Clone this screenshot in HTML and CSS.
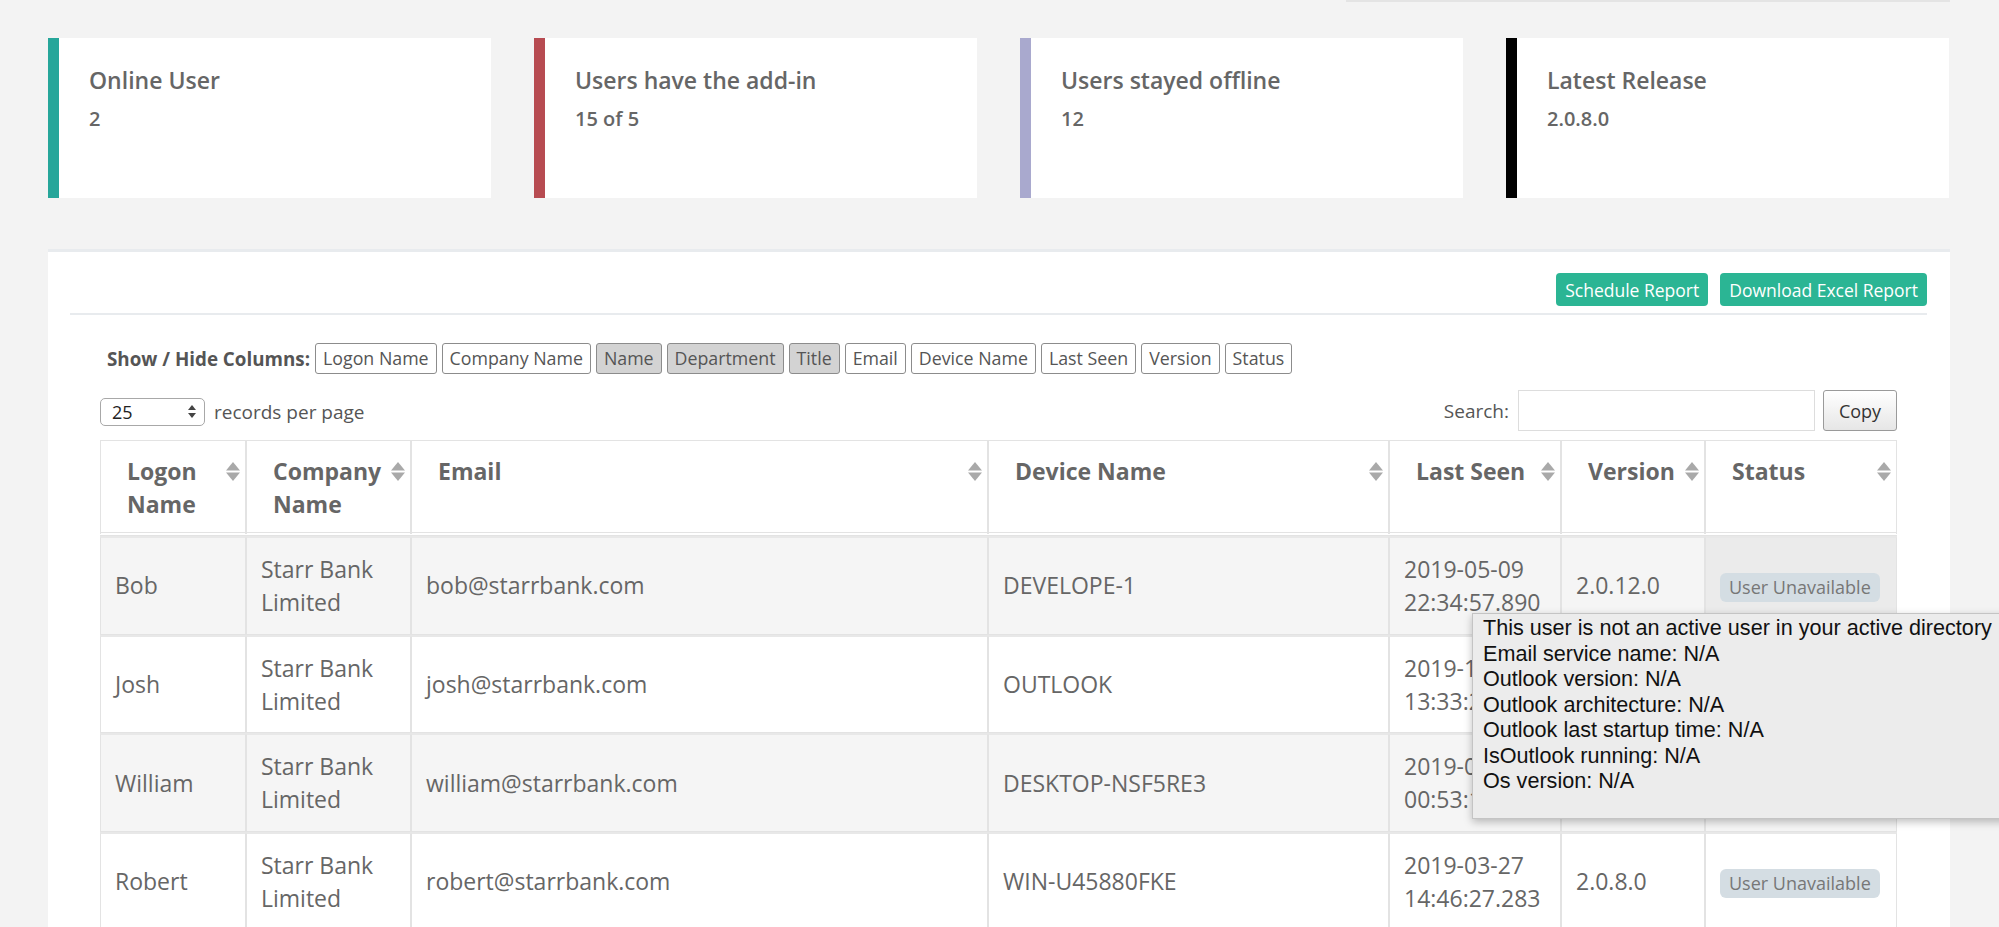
FILE: index.html
```html
<!DOCTYPE html>
<html>
<head>
<meta charset="utf-8">
<link rel="stylesheet" href="styles.css">
</head>
<body>
<div class="topbar"></div>

<div class="tiles">
  <div class="tile tile-teal"><div class="tile-title">Online User</div><div class="tile-value">2</div></div>
  <div class="tile tile-red"><div class="tile-title">Users have the add-in</div><div class="tile-value">15 of 5</div></div>
  <div class="tile tile-lav"><div class="tile-title">Users stayed offline</div><div class="tile-value">12</div></div>
  <div class="tile tile-black"><div class="tile-title">Latest Release</div><div class="tile-value">2.0.8.0</div></div>
</div>

<div class="panel">
  <div class="panel-toolbar">
    <button class="btn-success">Schedule Report</button>
    <button class="btn-success">Download Excel Report</button>
  </div>
  <div class="panel-rule"></div>
  <div class="panel-body">
    <div class="colvis">
      <span class="colvis-label">Show / Hide Columns:</span>
      <span class="colvis-btn">Logon Name</span>
      <span class="colvis-btn">Company Name</span>
      <span class="colvis-btn off">Name</span>
      <span class="colvis-btn off">Department</span>
      <span class="colvis-btn off">Title</span>
      <span class="colvis-btn">Email</span>
      <span class="colvis-btn">Device Name</span>
      <span class="colvis-btn">Last Seen</span>
      <span class="colvis-btn">Version</span>
      <span class="colvis-btn">Status</span>
    </div>
    <div class="controls">
      <div class="length">
        <span class="select"><span class="select-val">25</span>
          <svg class="select-arrows" width="8" height="13" viewBox="0 0 8 13"><path d="M4 0L8 5H0z" fill="#444"/><path d="M0 8H8L4 13z" fill="#444"/></svg>
        </span>
        <span class="length-text">records per page</span>
      </div>
      <div class="search">
        <span class="search-label">Search:</span>
        <span class="search-input"></span>
        <button class="btn-copy">Copy</button>
      </div>
    </div>

    <table class="grid">
      <colgroup>
        <col class="c1"><col class="c2"><col class="c3"><col class="c4"><col class="c5"><col class="c6"><col class="c7">
      </colgroup>
      <thead>
        <tr>
          <th>Logon Name<svg class="sort" viewBox="0 0 14 19"><path d="M0 8.5L7 0L14 8.5z"/><path d="M0 10.5H14L7 19z"/></svg></th>
          <th>Company Name<svg class="sort" viewBox="0 0 14 19"><path d="M0 8.5L7 0L14 8.5z"/><path d="M0 10.5H14L7 19z"/></svg></th>
          <th>Email<svg class="sort" viewBox="0 0 14 19"><path d="M0 8.5L7 0L14 8.5z"/><path d="M0 10.5H14L7 19z"/></svg></th>
          <th>Device Name<svg class="sort" viewBox="0 0 14 19"><path d="M0 8.5L7 0L14 8.5z"/><path d="M0 10.5H14L7 19z"/></svg></th>
          <th>Last Seen<svg class="sort" viewBox="0 0 14 19"><path d="M0 8.5L7 0L14 8.5z"/><path d="M0 10.5H14L7 19z"/></svg></th>
          <th>Version<svg class="sort" viewBox="0 0 14 19"><path d="M0 8.5L7 0L14 8.5z"/><path d="M0 10.5H14L7 19z"/></svg></th>
          <th>Status<svg class="sort" viewBox="0 0 14 19"><path d="M0 8.5L7 0L14 8.5z"/><path d="M0 10.5H14L7 19z"/></svg></th>
        </tr>
      </thead>
      <tbody>
        <tr class="odd">
          <td>Bob</td><td>Starr Bank Limited</td><td>bob@starrbank.com</td><td>DEVELOPE-1</td>
          <td>2019-05-09 22:34:57.890</td><td>2.0.12.0</td><td class="hover"><span class="badge">User Unavailable</span></td>
        </tr>
        <tr>
          <td>Josh</td><td>Starr Bank Limited</td><td>josh@starrbank.com</td><td>OUTLOOK</td>
          <td>2019-10-14 13:33:21.447</td><td>2.0.8.0</td><td><span class="badge">User Unavailable</span></td>
        </tr>
        <tr class="odd">
          <td>William</td><td>Starr Bank Limited</td><td>william@starrbank.com</td><td>DESKTOP-NSF5RE3</td>
          <td>2019-04-02 00:53:18.120</td><td>2.0.8.0</td><td><span class="badge">User Unavailable</span></td>
        </tr>
        <tr>
          <td>Robert</td><td>Starr Bank Limited</td><td>robert@starrbank.com</td><td>WIN-U45880FKE</td>
          <td>2019-03-27 14:46:27.283</td><td>2.0.8.0</td><td><span class="badge">User Unavailable</span></td>
        </tr>
      </tbody>
    </table>
  </div>
</div>

<div class="tooltip">
  <div>This user is not an active user in your active directory</div>
  <div>Email service name: N/A</div>
  <div>Outlook version: N/A</div>
  <div>Outlook architecture: N/A</div>
  <div>Outlook last startup time: N/A</div>
  <div>IsOutlook running: N/A</div>
  <div>Os version: N/A</div>
</div>
</body>
</html>
```

FILE: styles.css
```css
html, body {
  margin: 0;
  padding: 0;
  overflow: hidden;
}
body {
  background: #f3f3f3;
  font-family: "Open Sans", "Liberation Sans", sans-serif;
  color: #666;
  width: 1999px;
  height: 927px;
  position: relative;
}

.topbar {
  width: 604px;
  height: 2px;
  margin-left: 1346px;
  background: #e4e4e4;
}

.tiles {
  display: grid;
  grid-template-columns: repeat(4, 443px);
  column-gap: 43px;
  margin: 36px 0 0 48px;
}
.tile {
  height: 160px;
  box-sizing: border-box;
  background: #fff;
  border-left: 11px solid #26a69a;
  padding: 27px 30px 0;
}
.tile-red { border-left-color: #b74b51; }
.tile-lav { border-left-color: #a9a9ce; }
.tile-black { border-left-color: #000; }
.tile-title {
  font-size: 23px;
  font-weight: 600;
  line-height: 31px;
  color: #666;
}
.tile-value {
  font-size: 20px;
  font-weight: 600;
  line-height: 27px;
  margin-top: 9px;
  color: #666;
}

.panel {
  width: 1902px;
  box-sizing: border-box;
  margin: 51px 0 0 48px;
  background: #fff;
  border-top: 3px solid #e8ebee;
  padding: 0 23px 40px 22px;
}
.panel-toolbar {
  display: flex;
  justify-content: flex-end;
  gap: 12px;
  padding-top: 21px;
  padding-bottom: 7px;
}
.btn-success {
  height: 33px;
  border: 0;
  border-radius: 4px;
  background: #2bb594;
  color: #fff;
  font-family: "Open Sans", sans-serif;
  font-size: 17.5px;
  padding: 0 9px;
  margin: 0;
}
.panel-rule {
  height: 2px;
  background: #e8ebee;
}
.panel-body {
  padding: 0 30px;
}

.colvis {
  margin-top: 28px;
  height: 31px;
  display: flex;
  align-items: center;
  gap: 5px;
  padding-left: 7px;
}
.colvis-label {
  font-size: 18.8px;
  font-weight: 700;
  color: #555;
}
.colvis-btn {
  height: 31px;
  box-sizing: border-box;
  border: 1px solid #8c8c8c;
  border-radius: 3px;
  padding: 0 7px;
  font-size: 17.8px;
  line-height: 29px;
  color: #555;
  background: #fff;
}
.colvis-btn.off {
  background: #d3d3d3;
}

.controls {
  margin-top: 16px;
  display: flex;
  justify-content: space-between;
  align-items: center;
  height: 41px;
}
.length {
  display: flex;
  align-items: center;
  gap: 9px;
  padding-left: 0;
  padding-top: 2px;
}
.select {
  width: 105px;
  height: 28px;
  box-sizing: border-box;
  border: 1px solid #a8a8a8;
  border-radius: 5px;
  background: #fff;
  display: flex;
  align-items: center;
  justify-content: space-between;
  padding: 0 8px 0 11px;
}
.select-val {
  font-size: 18px;
  color: #222;
}
.length-text, .search-label {
  font-size: 19px;
  color: #555;
}
.search {
  display: flex;
  align-items: center;
}
.search-label {
  margin-right: 9px;
}
.search-input {
  width: 297px;
  height: 41px;
  box-sizing: border-box;
  border: 1px solid #ddd;
  background: #fff;
  margin-right: 8px;
}
.btn-copy {
  width: 74px;
  height: 41px;
  margin: 0;
  border: 1px solid #9a9a9a;
  border-radius: 3px;
  background: linear-gradient(#ffffff, #e6e6e6);
  font-family: "Open Sans", sans-serif;
  font-size: 18px;
  color: #333;
  padding: 0;
}

.grid {
  margin-top: 9px;
  width: 1797px;
  table-layout: fixed;
  border-collapse: separate;
  border-spacing: 0;
  font-size: 23px;
  line-height: 1.4286;
  color: #666;
}
.c1 { width: 146px; }
.c2 { width: 165px; }
.c3 { width: 577px; }
.c4 { width: 401px; }
.c5 { width: 172px; }
.c6 { width: 144px; }
.c7 { width: 192px; }

.grid th, .grid td {
  border: 1px solid #e3e3e3;
}
.grid th {
  position: relative;
  text-align: left;
  vertical-align: top;
  font-weight: 700;
  padding: 14px 22px 11px 26px;
  height: 66px;
  border-bottom: 4px double #e3e3e3;
}
.sort {
  position: absolute;
  right: 5px;
  top: 21px;
  width: 14px;
  height: 19px;
  fill: #a9a9a9;
}
.grid td {
  padding: 15px 14px;
  vertical-align: middle;
  border-top: 2px solid #e8e8e8;
  background: #fff;
}
.grid tr.odd td {
  background: #f5f5f5;
}
.grid tr.odd td.hover {
  background: #ebebeb;
}
.badge {
  display: inline-block;
  height: 29px;
  line-height: 29px;
  padding: 0 9px;
  border-radius: 6px;
  background: #d4dde3;
  color: #777;
  font-size: 18px;
}

.tooltip {
  position: absolute;
  left: 1472px;
  top: 613px;
  width: 560px;
  height: 206px;
  box-sizing: border-box;
  background: #ececec;
  border: 1px solid #c4c4c4;
  box-shadow: 0 3px 8px rgba(0, 0, 0, 0.25);
  padding: 1px 10px 0;
  font-family: "Liberation Sans", Arial, sans-serif;
  font-size: 21.6px;
  line-height: 25.5px;
  color: #111;
}
```
